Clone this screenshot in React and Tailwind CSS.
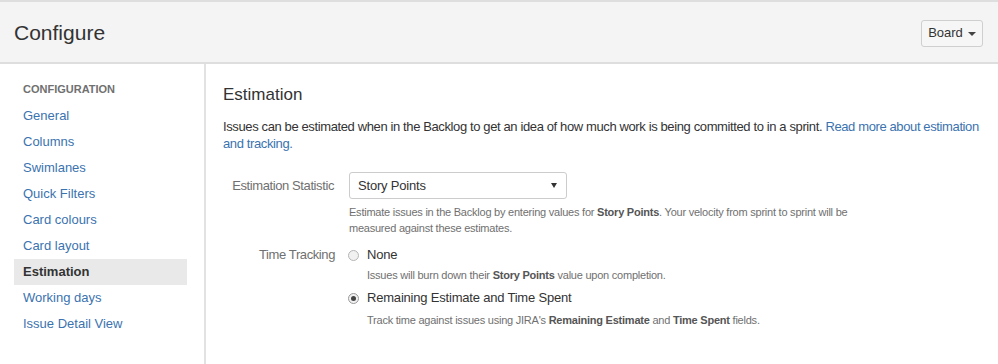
export default function App() {
  const items = ["General", "Columns", "Swimlanes", "Quick Filters", "Card colours", "Card layout", "Estimation", "Working days", "Issue Detail View"];
  return (
    <div className="w-[998px] h-[364px] bg-white overflow-hidden flex flex-col text-[#333]" style={{ fontFamily: '"Liberation Sans", Arial, sans-serif' }}>
      <header className="h-[64px] shrink-0 bg-[#f4f4f4] border-y-2 border-[#dedede] flex items-center justify-between pl-[14px] pr-[15px]">
        <h1 className="text-[21px] leading-none text-[#333] mt-[1px]">Configure</h1>
        <button className="h-[27px] w-[62px] mt-[2px] border border-[#cfcfcf] rounded-[3px] bg-[#f6f6f6] flex items-center justify-center gap-[5px] text-[13px] text-[#333]">
          <span>Board</span>
          <span className="w-0 h-0 border-l-[4px] border-r-[4px] border-t-[4px] border-l-transparent border-r-transparent border-t-[#444] mt-[1px]"></span>
        </button>
      </header>
      <div className="flex flex-1">
        <nav className="w-[206px] shrink-0 border-r-2 border-[#e2e2e2] pl-[14px] pr-[17px] pt-[18px]">
          <div className="pl-[9px] h-[14px] text-[11px] font-bold text-[#707070] leading-[14px] mb-[7px]">CONFIGURATION</div>
          {items.map((it) => (
            <div key={it} className={"h-[26px] pl-[9px] flex items-center text-[13px] " + (it === "Estimation" ? "bg-[#e9e9e9] font-bold text-[#333]" : "text-[#3b73af]")}>
              {it}
            </div>
          ))}
        </nav>
        <main className="flex-1 pl-[17px] pt-[21px]">
          <h2 className="text-[17px] leading-[20px] text-[#333]">Estimation</h2>
          <p className="mt-[13px] text-[13px] leading-[17px] text-[#333] tracking-[-0.38px] whitespace-nowrap">
            Issues can be estimated when in the Backlog to get an idea of how much work is being committed to in a sprint.{" "}
            <span className="text-[#3b73af]">Read more about estimation<br />and tracking.</span>
          </p>
          <div className="mt-[20px] flex">
            <div className="w-[111px] shrink-0 text-right text-[13px] text-[#707070] pt-[6px] leading-[15px] tracking-[-0.4px] whitespace-nowrap">Estimation Statistic</div>
            <div className="ml-[15px]">
              <div className="w-[218px] h-[27px] border border-[#cccccc] rounded-[3px] bg-white flex items-center justify-between pl-[8px] pr-[9px] text-[13px] text-[#333]">
                <span className="tracking-[-0.2px]">Story Points</span>
                <span className="w-0 h-0 border-l-[3px] border-r-[3px] border-t-[5px] border-l-transparent border-r-transparent border-t-[#333]"></span>
              </div>
              <p className="mt-[5px] text-[11px] leading-[16px] text-[#707070] tracking-[-0.23px] whitespace-nowrap">
                Estimate issues in the Backlog by entering values for <b className="text-[#555]">Story Points</b>. Your velocity from sprint to sprint will be<br />
                measured against these estimates.
              </p>
            </div>
          </div>
          <div className="mt-[11px] flex">
            <div className="w-[112px] shrink-0 text-right text-[13px] text-[#707070] leading-[16px] tracking-[-0.4px] whitespace-nowrap">Time Tracking</div>
            <div className="ml-[13px]">
              <div className="flex items-center h-[16px]">
                <span className="w-[11px] h-[11px] rounded-full border border-[#b5b5b5] bg-[#f1f1f1] mr-[8px]"></span>
                <span className="text-[13px] text-[#333] tracking-[-0.2px]">None</span>
              </div>
              <p className="mt-[4px] ml-[19px] text-[11px] leading-[16px] text-[#707070] tracking-[-0.23px] whitespace-nowrap">
                Issues will burn down their <b className="text-[#555]">Story Points</b> value upon completion.
              </p>
              <div className="mt-[7px] flex items-center h-[16px]">
                <span className="w-[11px] h-[11px] rounded-full border border-[#9a9a9a] bg-[#f1f1f1] mr-[8px] flex items-center justify-center">
                  <span className="w-[5px] h-[5px] rounded-full bg-[#444]"></span>
                </span>
                <span className="text-[13px] text-[#333] tracking-[-0.2px]">Remaining Estimate and Time Spent</span>
              </div>
              <p className="mt-[6px] ml-[19px] text-[11px] leading-[16px] text-[#707070] tracking-[-0.23px] whitespace-nowrap">
                Track time against issues using JIRA's <b className="text-[#555]">Remaining Estimate</b> and <b className="text-[#555]">Time Spent</b> fields.
              </p>
            </div>
          </div>
        </main>
      </div>
    </div>
  );
}
